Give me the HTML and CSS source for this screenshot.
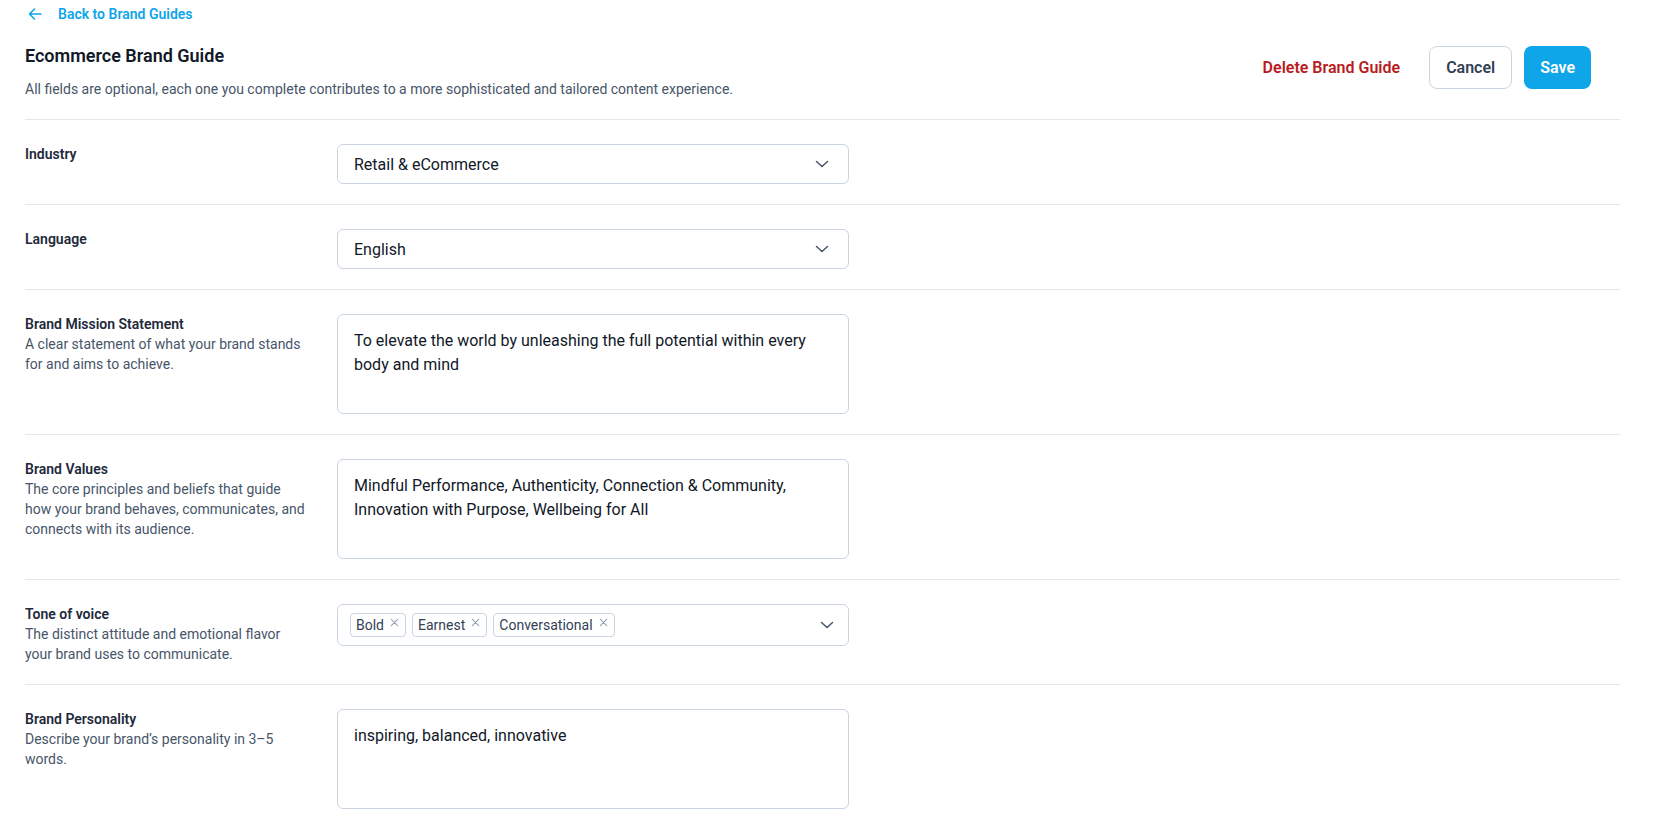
FILE: index.html
```html
<!DOCTYPE html>
<html>
<head>
    <title>Ecommerce Brand Guide</title>
    <meta charset="UTF-8">
    <link rel="stylesheet" href="styles.css">
</head>
<body>
    <div class="page">
        <a class="back-link" href="#">
            <svg width="20" height="20" viewBox="0 0 20 20" fill="none" stroke="currentColor" stroke-width="1.6" stroke-linecap="round" stroke-linejoin="round">
                <path d="M16 10H4.5M9.5 5L4.5 10l5 5"/>
            </svg>
            Back to Brand Guides
        </a>

        <div class="guide-header">
            <div>
                <h1 class="guide-title">Ecommerce Brand Guide</h1>
                <p class="guide-intro">All fields are optional, each one you complete contributes to a more sophisticated and tailored content experience.</p>
            </div>
            <div class="actions">
                <button class="btn btn-danger">Delete Brand Guide</button>
                <button class="btn btn-outline">Cancel</button>
                <button class="btn btn-primary">Save</button>
            </div>
        </div>

        <div class="field">
            <div class="field-label">
                <div class="field-name">Industry</div>
            </div>
            <div class="select">
                <span>Retail &amp; eCommerce</span>
                <svg class="chevron" width="20" height="20" viewBox="0 0 20 20" fill="none" stroke="currentColor" stroke-width="1.5" stroke-linecap="round" stroke-linejoin="round"><path d="M4.5 7.5L10 12.5l5.5-5"/></svg>
            </div>
        </div>

        <div class="field">
            <div class="field-label">
                <div class="field-name">Language</div>
            </div>
            <div class="select">
                <span>English</span>
                <svg class="chevron" width="20" height="20" viewBox="0 0 20 20" fill="none" stroke="currentColor" stroke-width="1.5" stroke-linecap="round" stroke-linejoin="round"><path d="M4.5 7.5L10 12.5l5.5-5"/></svg>
            </div>
        </div>

        <div class="field">
            <div class="field-label">
                <div class="field-name">Brand Mission Statement</div>
                <div class="field-help">A clear statement of what your brand stands for and aims to achieve.</div>
            </div>
            <textarea class="textarea">To elevate the world by unleashing the full potential within every body and mind</textarea>
        </div>

        <div class="field">
            <div class="field-label">
                <div class="field-name">Brand Values</div>
                <div class="field-help">The core principles and beliefs that guide how your brand behaves, communicates, and connects with its audience.</div>
            </div>
            <textarea class="textarea">Mindful Performance, Authenticity, Connection &amp; Community, Innovation with Purpose, Wellbeing for All</textarea>
        </div>

        <div class="field">
            <div class="field-label">
                <div class="field-name">Tone of voice</div>
                <div class="field-help">The distinct attitude and emotional flavor your brand uses to communicate.</div>
            </div>
            <div class="select tag-select">
                <div class="tags">
                    <span class="tag">Bold <svg width="9" height="9" viewBox="0 0 10 10" stroke="currentColor" stroke-width="1.2" stroke-linecap="round"><path d="M1.5 1.5l7 7M8.5 1.5l-7 7"/></svg></span>
                    <span class="tag">Earnest <svg width="9" height="9" viewBox="0 0 10 10" stroke="currentColor" stroke-width="1.2" stroke-linecap="round"><path d="M1.5 1.5l7 7M8.5 1.5l-7 7"/></svg></span>
                    <span class="tag">Conversational <svg width="9" height="9" viewBox="0 0 10 10" stroke="currentColor" stroke-width="1.2" stroke-linecap="round"><path d="M1.5 1.5l7 7M8.5 1.5l-7 7"/></svg></span>
                </div>
                <svg class="chevron" width="20" height="20" viewBox="0 0 20 20" fill="none" stroke="currentColor" stroke-width="1.5" stroke-linecap="round" stroke-linejoin="round"><path d="M4.5 7.5L10 12.5l5.5-5"/></svg>
            </div>
        </div>

        <div class="field">
            <div class="field-label">
                <div class="field-name">Brand Personality</div>
                <div class="field-help">Describe your brand’s personality in 3–5 words.</div>
            </div>
            <textarea class="textarea">inspiring, balanced, innovative</textarea>
        </div>
    </div>
</body>
</html>
```

FILE: styles.css
```css
/* Brand guide editor */
* {
    box-sizing: border-box;
}

body {
    margin: 0;
    font-family: Roboto, "Liberation Sans", sans-serif;
    color: #111827;
    background-color: #fff;
}

.page {
    padding: 4px 33px 0 25px;
}

.back-link {
    display: flex;
    align-items: center;
    gap: 13px;
    height: 20px;
    color: #0ea5e9;
    font-size: 14px;
    font-weight: 600;
    text-decoration: none;
}

/* Header */
.guide-header {
    display: flex;
    justify-content: space-between;
    align-items: flex-start;
    margin-top: 18px;
    padding-bottom: 20px;
}

.guide-title {
    margin: 0;
    font-size: 18px;
    line-height: 28px;
    font-weight: 600;
    color: #111827;
}

.guide-intro {
    margin: 9px 0 0;
    font-size: 14px;
    line-height: 20px;
    color: #475569;
}

.actions {
    display: flex;
    gap: 12px;
    margin-top: 4px;
    margin-right: 29px;
}

.btn {
    height: 43px;
    padding: 0 16px;
    border: 1px solid transparent;
    border-radius: 8px;
    background: none;
    font-family: inherit;
    font-size: 16px;
    font-weight: 600;
    cursor: pointer;
}

.btn-danger {
    color: #b91c1c;
}

.btn-outline {
    border-color: #cbd5e1;
    color: #334155;
}

.btn-primary {
    padding: 0 15px;
    background-color: #0ea5e9;
    color: #fff;
}

/* Form rows */
.field {
    display: grid;
    grid-template-columns: 288px 512px;
    gap: 24px;
    padding: 24px 0 20px;
    border-top: 1px solid #e5e7eb;
    align-items: start;
}

.field-label {
    padding-right: 6px;
}

.field-name {
    font-size: 14px;
    line-height: 20px;
    font-weight: 600;
    color: #1e293b;
}

.field-help {
    font-size: 14px;
    line-height: 20px;
    color: #475569;
}

.select {
    display: flex;
    align-items: center;
    justify-content: space-between;
    height: 40px;
    padding: 0 16px;
    border: 1px solid #cbd5e1;
    border-radius: 6px;
    font-size: 16px;
    color: #111827;
}

.chevron {
    color: #475569;
    flex-shrink: 0;
}

.tag-select {
    height: 42px;
    padding: 0 11px 0 12px;
}

.tags {
    display: flex;
    gap: 6px;
}

.tag {
    display: inline-flex;
    align-items: center;
    gap: 6px;
    height: 24px;
    padding: 0 6px 0 5px;
    border: 1px solid #cbd5e1;
    border-radius: 4px;
    font-size: 14px;
    color: #334155;
}

.tag svg {
    color: #94a3b8;
    margin-top: -5px;
}

.textarea {
    display: block;
    width: 100%;
    height: 100px;
    padding: 14px 16px 10px;
    border: 1px solid #cbd5e1;
    border-radius: 6px;
    font-family: inherit;
    font-size: 16px;
    line-height: 24px;
    color: #111827;
    resize: none;
    outline: none;
}
```
